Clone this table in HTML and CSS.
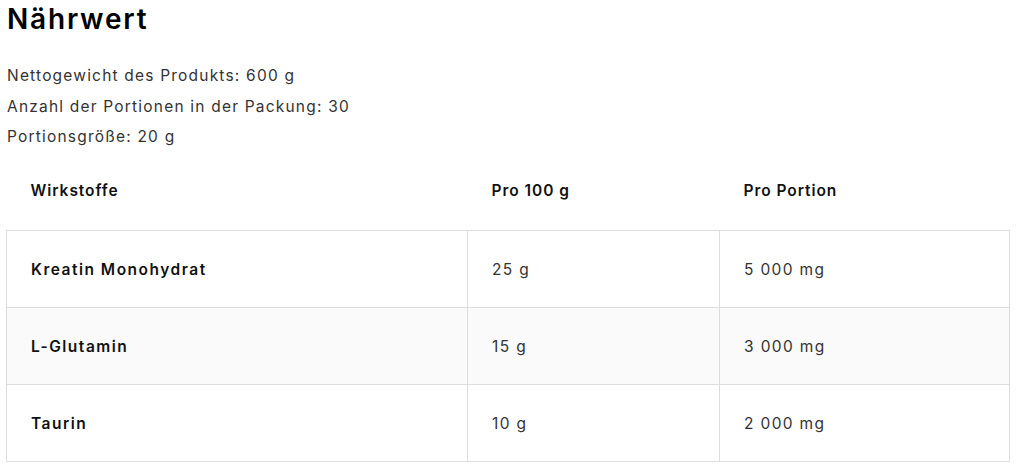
FILE: index.html
```html
<!DOCTYPE html>
<html lang="de">
<head>
<meta charset="utf-8">
<title>Nährwert</title>
<link rel="stylesheet" href="styles.css">
</head>
<body>
<section class="nutrition">
  <h2 class="title">Nährwert</h2>
  <div class="facts">
    <p>Nettogewicht des Produkts: 600 g</p>
    <p>Anzahl der Portionen in der Packung: 30</p>
    <p>Portionsgröße: 20 g</p>
  </div>
  <table class="table">
    <thead>
      <tr>
        <th class="c1">Wirkstoffe</th>
        <th class="c2">Pro 100 g</th>
        <th class="c3">Pro Portion</th>
      </tr>
    </thead>
    <tbody>
      <tr><td class="name">Kreatin Monohydrat</td><td>25 g</td><td>5 000 mg</td></tr>
      <tr class="alt"><td class="name">L-Glutamin</td><td>15 g</td><td>3 000 mg</td></tr>
      <tr><td class="name">Taurin</td><td>10 g</td><td>2 000 mg</td></tr>
    </tbody>
  </table>
</section>
</body>
</html>
```
FILE: styles.css
```css
html, body {
  margin: 0;
  padding: 0;
  background: #fff;
}
body {
  font-family: "Inter", "Open Sans", sans-serif;
  color: #222;
}
.nutrition {
  padding: 0 9px 0 6px;
}
.title {
  margin: 0;
  padding: 1px 0 0 1px;
  font-size: 28px;
  line-height: 36px;
  font-weight: 600;
  letter-spacing: 1.8px;
  color: #000;
}
.facts {
  margin-top: 24px;
  padding-left: 1px;
}
.facts p {
  margin: 0;
  font-size: 15.5px;
  line-height: 30.5px;
  letter-spacing: 1.2px;
  color: #333;
}
.table {
  width: 100%;
  border-collapse: collapse;
  margin-top: 0;
  font-size: 15.5px;
}
.table th {
  text-align: left;
  font-weight: 600;
  letter-spacing: 0.95px;
  color: #111;
  height: 78px;
  padding: 0 24px 2px;
  box-sizing: border-box;
}
.c1 { width: 461px; }
.c2 { width: 252px; }
.table td {
  height: 77px;
  padding: 0 24px;
  border: 1px solid #ddd;
  box-sizing: border-box;
  letter-spacing: 1.35px;
  color: #333;
}
.table td.name {
  font-weight: 600;
  letter-spacing: 1.5px;
  color: #111;
}
.alt td {
  background: #fafafa;
}
```
